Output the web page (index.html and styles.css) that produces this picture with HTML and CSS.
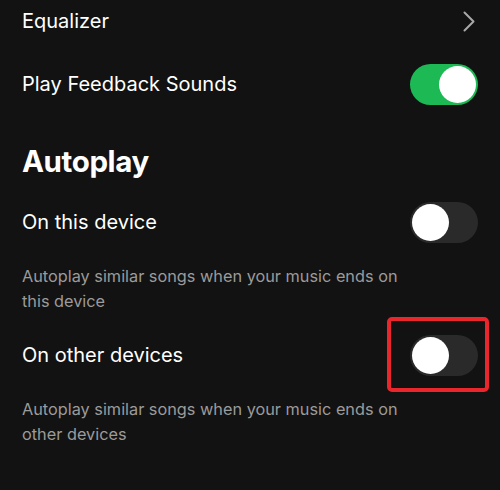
FILE: index.html
```html
<!DOCTYPE html>
<html>
<head>
<meta charset="utf-8">
<link rel="stylesheet" href="styles.css">
</head>
<body>
<div class="settings">
  <div class="row row-eq">
    <span class="label">Equalizer</span>
    <svg class="chevron" width="12" height="21" viewBox="0 0 12 21"><path d="M1.5 1.5 L10.5 10.5 L1.5 19.5" fill="none" stroke="#a8a8a8" stroke-width="2" stroke-linecap="round" stroke-linejoin="round"/></svg>
  </div>
  <div class="row row-feedback">
    <span class="label">Play Feedback Sounds</span>
    <div class="toggle on"><div class="knob"></div></div>
  </div>
  <h2 class="heading">Autoplay</h2>
  <div class="row row-this">
    <span class="label">On this device</span>
    <div class="toggle"><div class="knob"></div></div>
  </div>
  <p class="desc">Autoplay similar songs when your music ends on this device</p>
  <div class="row row-other">
    <span class="label">On other devices</span>
    <div class="toggle-wrap">
      <div class="toggle"><div class="knob"></div></div>
      <div class="highlight"></div>
    </div>
  </div>
  <p class="desc desc-other">Autoplay similar songs when your music ends on other devices</p>
</div>
</body>
</html>
```
FILE: styles.css
```css
html, body {
  margin: 0;
  padding: 0;
  background: #121212;
}
body {
  width: 500px;
  height: 490px;
  overflow: hidden;
  font-family: "Inter", "Liberation Sans", sans-serif;
  color: #ffffff;
}
.settings {
  padding: 0 22px 0 22px;
}
.row {
  display: flex;
  align-items: center;
  justify-content: space-between;
  height: 44px;
}
.row-eq {
  height: 42px;
  padding-right: 3px;
}
.row-feedback {
  margin-top: 20px;
}
.label {
  font-size: 20px;
}
.chevron {
  display: block;
}
.heading {
  margin: 35px 0 0 0;
  font-size: 29.5px;
  font-weight: 700;
  line-height: 40px;
  letter-spacing: -0.4px;
}
.row-this {
  margin-top: 19px;
}
.desc {
  margin: 20px 0 0 0;
  width: 400px;
  font-size: 16.3px;
  line-height: 25px;
  color: #9b9b9b;
}
.row-other {
  margin-top: 19px;
}
.desc-other {
  margin-top: 20px;
}
.toggle {
  width: 68px;
  height: 41px;
  border-radius: 21px;
  background: #2a2a2a;
  position: relative;
  display: flex;
  align-items: center;
  padding: 0 2px;
  box-sizing: border-box;
}
.toggle .knob {
  width: 37px;
  height: 37px;
  border-radius: 50%;
  background: #ffffff;
}
.toggle.on {
  background: #1db954;
  justify-content: flex-end;
}
.toggle-wrap {
  position: relative;
}
.highlight {
  position: absolute;
  left: -23px;
  right: -11px;
  top: -18px;
  bottom: -16px;
  border: 4px solid #e8262c;
  border-radius: 5px;
}
```
